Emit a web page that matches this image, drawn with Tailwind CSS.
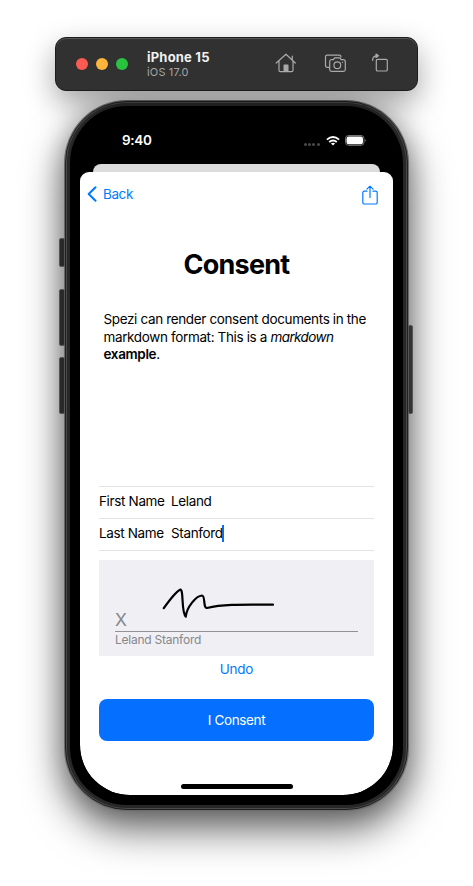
<!DOCTYPE html>
<html lang="en">
<head>
<meta charset="utf-8">
<title>iPhone 15 – Consent</title>
<script src="https://cdn.jsdelivr.net/npm/@tailwindcss/browser@4"></script>
</head>
<body class="bg-white w-[473px] h-[886px] overflow-hidden font-['Inter','Liberation_Sans',sans-serif] text-black">
<main class="flex flex-col pt-[37px]">
  <!-- Simulator toolbar -->
  <header class="relative z-10 ml-[55px] flex h-[54px] w-[363px] items-center rounded-[11px] border border-[#1c1c1c] bg-[#313131] pl-[20px] shadow-[inset_0_1px_0_#555,0_12px_30px_rgba(0,0,0,0.36)]">
    <div class="flex gap-2">
      <span class="size-3 rounded-full bg-[#ff5a52]"></span>
      <span class="size-3 rounded-full bg-[#ffb43c]"></span>
      <span class="size-3 rounded-full bg-[#29c43f]"></span>
    </div>
    <div class="ml-[19px] w-[126px] whitespace-nowrap">
      <div class="text-[13px] leading-[15px] font-bold tracking-[0.2px] text-[#f0f0f0]">iPhone 15</div>
      <div class="text-[11px] leading-[14px] tracking-[0.150px] text-[#a5a5a5]">iOS 17.0</div>
    </div>
    <svg class="ml-[2px] mb-[2px] h-[22px] w-[22px]" viewBox="0 0 22 22" fill="none" stroke="#aaa" stroke-width="1.2" stroke-linecap="round" stroke-linejoin="round"><path d="M1.200 11 11 2.2l9.300 8.800M17.300 7.500V4M4 9.200v9.300q0 1.200 1.200 1.200h11.600q1.200 0 1.200-1.200V9.200"/><path d="M9.100 19.500v-6.300h3.800v6.300z" fill="#aaa"/></svg>
    <svg class="ml-[27px] mb-[2px] h-[22px] w-[24px]" viewBox="0 0 24 22" fill="none" stroke="#aaa" stroke-width="1.2" stroke-linecap="round" stroke-linejoin="round"><path d="M5 15.300H3.300Q1.500 15.300 1.500 13.500V5q0-1.800 1.800-1.800h12Q17 3.200 17 5"/><path d="M7.500 7.600h2l1-1.700h5.500l1 1.700h2.200Q21.300 7.600 21.300 9.500v8q0 1.800-1.800 1.800h-12q-1.800 0-1.800-1.800v-8Q5.700 7.600 7.500 7.600z"/><circle cx="13.300" cy="13.200" r="3.400"/><path d="M18.400 10.300h.2"/></svg>
    <svg class="ml-[23px] mb-[2px] h-[22px] w-[20px]" viewBox="0 0 20 22" fill="none" stroke="#aaa" stroke-width="1.2" stroke-linecap="round" stroke-linejoin="round"><rect x="5.300" y="7.300" width="11" height="11.700" rx="1.300"/><path d="M1.700 8.500Q1.200 3.800 6.500 3.800"/><path d="M5 2 7.500 3.800 5 5.600z" fill="#aaa"/></svg>
  </header>

  <!-- Device -->
  <section class="relative mt-[9px] ml-[64px] h-[711px] w-[345px] rounded-[63px] bg-[#6b6b6b] p-px shadow-[0_18px_40px_rgba(0,0,0,0.6),0_2px_26px_rgba(0,0,0,0.22)]">
    <span class="absolute top-[138px] left-[-5px] h-[29px] w-[6px] rounded-[2px] border border-[#555] bg-[#292929]"></span>
    <span class="absolute top-[189px] left-[-5px] h-[57px] w-[6px] rounded-[2px] border border-[#555] bg-[#292929]"></span>
    <span class="absolute top-[257px] left-[-5px] h-[57px] w-[6px] rounded-[2px] border border-[#555] bg-[#292929]"></span>
    <span class="absolute top-[225px] right-[-4px] h-[89px] w-[5px] rounded-[2px] border border-[#555] bg-[#333]"></span>
    <div class="relative h-full rounded-[62px] border border-[#202020] bg-[#4a4a4a] p-px">
      <div class="h-full rounded-[60px] bg-[#272727] p-[3px]">
        <div class="h-full rounded-[57px] bg-black px-[10px] pt-[11px] pb-[10px]">
          <div class="flex h-full flex-col overflow-hidden rounded-[50px]">
            <!-- Status bar -->
            <div class="flex h-[47px] shrink-0 items-center pl-[42px] text-white">
              <span class="w-[182px] text-[13.500px] leading-none font-semibold tracking-[-0.3px]">9:40</span>
              <span class="mt-[7px] flex gap-[1.200px]"><i class="size-[3px] rounded-full bg-[#4a4a4a]"></i><i class="size-[3px] rounded-full bg-[#4a4a4a]"></i><i class="size-[3px] rounded-full bg-[#4a4a4a]"></i><i class="size-[3px] rounded-full bg-[#4a4a4a]"></i></span>
              <svg class="ml-[6px] h-[10px] w-[14px]" viewBox="0 0 14 10" fill="none" stroke="#fff" stroke-width="1.900"><path d="M.9 3.600Q7-1.600 13.100 3.600M3.200 6Q7 2.800 10.800 6"/><path d="M7 9.600 4.900 7.600Q7 6 9.100 7.600z" fill="#fff" stroke="none"/></svg>
              <svg class="ml-[5px] h-[11px] w-[22px]" viewBox="0 0 22 11"><rect x=".5" y=".5" width="18.500" height="9.800" rx="3" fill="none" stroke="#777"/><rect x="1.500" y="1.500" width="16.500" height="7.800" rx="2.200" fill="#fff"/><path d="M20.200 3.700q1.600 1.700 0 3.400z" fill="#777"/></svg>
            </div>
            <!-- Sheet behind -->
            <div class="mx-[13px] h-[8px] shrink-0 rounded-t-[8px] bg-[#dcdcdc]"></div>
            <!-- Sheet -->
            <div class="flex flex-1 flex-col rounded-t-[9px] rounded-b-[50px] bg-white">
              <nav class="flex h-[44px] shrink-0 items-center justify-between pr-[14px] pl-[7px] text-[#007aff]">
                <div class="flex items-center gap-[6px] text-[13.500px]">
                  <svg class="h-[16px] w-[10px]" viewBox="0 0 10 16" fill="none" stroke="currentColor" stroke-width="2" stroke-linecap="round" stroke-linejoin="round"><path d="M8.500 1.200 1.700 8l6.800 6.800"/></svg>
                  <span class="tracking-[-0.4px]">Back</span>
                </div>
                <svg class="mt-px h-[20px] w-[18px]" viewBox="0 0 18 20" fill="none" stroke="currentColor" stroke-width="1.200" stroke-linecap="round" stroke-linejoin="round"><path d="M6 6.200H3.400Q1.800 6.200 1.800 7.800v9.600Q1.800 19 3.400 19h11.200q1.600 0 1.600-1.600V7.800q0-1.600-1.600-1.600H12M9 12.500V1.200M5.900 4.200 9 1.100l3.100 3.100"/></svg>
              </nav>
              <h1 class="mt-[31px] text-center text-[27px] leading-[36px] font-bold tracking-[-0.750px]">Consent</h1>
              <p class="mt-[28px] ml-[23.500px] h-[175px] text-[13.500px] leading-[17.500px] whitespace-nowrap"><span class="tracking-[-0.360px]">Spezi can render consent documents in the<br>markdown format: This is a <em class="tracking-[-0.600px]">markdown</em></span><br><b class="font-semibold tracking-[-0.350px]">example</b>.</p>
              <div class="mx-[19px] flex flex-col text-[13.500px] tracking-[-0.350px] whitespace-nowrap">
                <div class="flex h-[32px] items-center border-t border-[#e2e2e4] pb-[2px]"><span class="w-[72px]">First Name</span><span>Leland</span></div>
                <div class="flex h-[33px] items-center border-y border-[#e2e2e4] pb-[2px]"><span class="w-[72px]">Last Name</span><span>Stanford</span><i class="-ml-px h-[17px] w-[2px] bg-[#0a6cff]"></i></div>
                <div class="mt-[9px] h-[96px] bg-[#f0eff4] px-[16px] text-[#87878b]">
                  <div class="flex h-[72px] items-end border-b border-[#929296] pb-[2px]">
                    <span class="w-[47px] text-[17.500px] leading-[18px]">X</span>
                    <svg class="mb-[8px] h-[34px] w-[114px]" viewBox="0 0 114 34" fill="none" stroke="#000" stroke-width="2.200" stroke-linecap="round" stroke-linejoin="round"><path d="M1.800 21.200Q13 5.500 18 2.800C22 1 19 26 23.800 29.500C24.800 20 34 9 40 8.500C43.500 8.500 41 21.500 45 21C61 17 80 17.500 111 17.700"/></svg>
                  </div>
                  <div class="text-[12px] leading-[16px] tracking-[-0.240px]">Leland Stanford</div>
                </div>
                <div class="h-[43px] pt-[3px] text-center leading-[20px] tracking-[-0.250px] text-[#007aff]">Undo</div>
                <div class="flex h-[42px] items-center justify-center rounded-[8px] bg-[#0570ff] tracking-[-0.350px] text-white">I Consent</div>
              </div>
              <div class="mt-auto mb-[6px] h-[5px] w-[112px] self-center rounded-full bg-black"></div>
            </div>
          </div>
        </div>
      </div>
    </div>
  </section>
</main>
</body>
</html>
